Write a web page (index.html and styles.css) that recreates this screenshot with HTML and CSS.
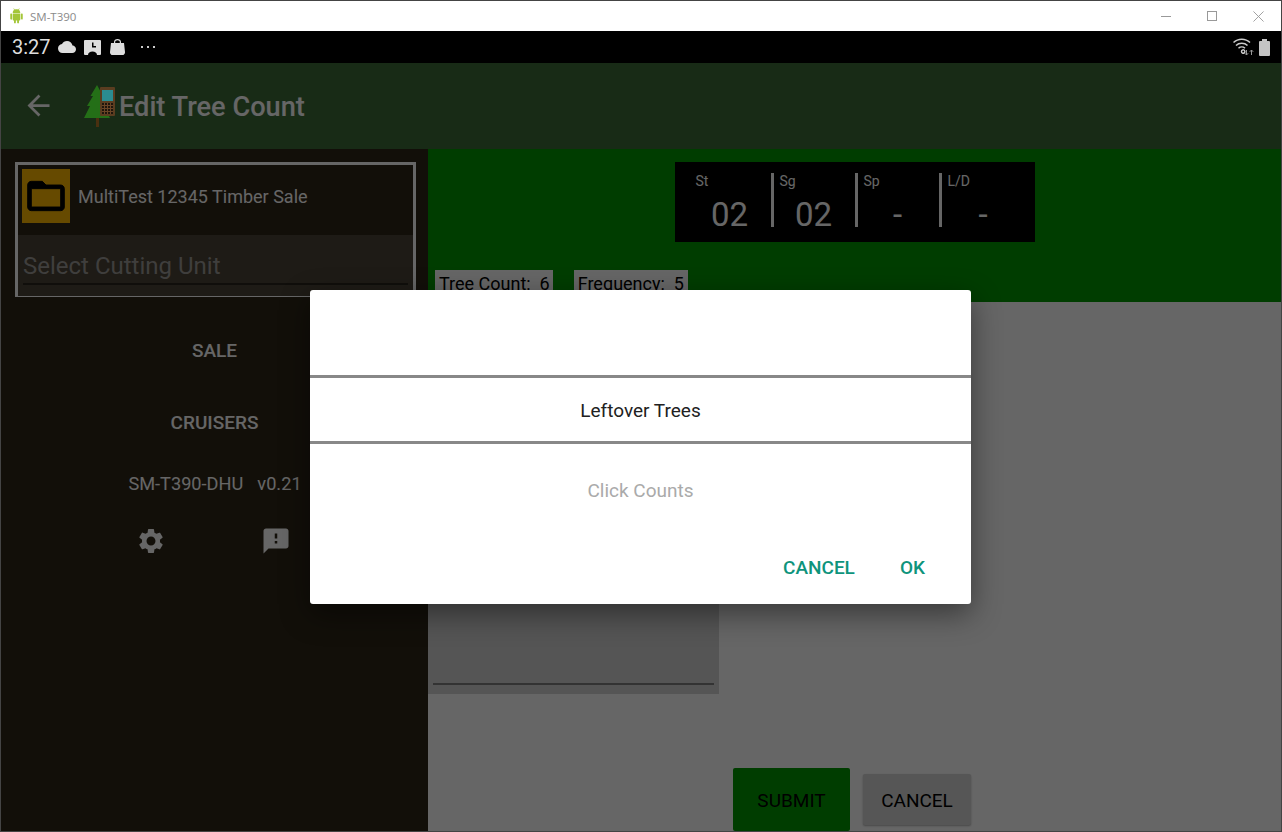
FILE: index.html
```html
<!DOCTYPE html>
<html>
	<head>
		<meta charset="UTF-8">
		<title>SM-T390</title>
		<link rel="stylesheet" href="styles.css">
	</head>
	<body>
		<div id="wrap">
			<div class="titlebar">
				<svg class="droid" viewBox="0 0 24 24"><path d="M6 18c0 .55.45 1 1 1h1v3.500c0 .83.67 1.500 1.500 1.500s1.500-.67 1.500-1.500V19h2v3.500c0 .83.67 1.500 1.500 1.500s1.500-.67 1.500-1.500V19h1c.55 0 1-.45 1-1V8H6v10zM3.500 8C2.670 8 2 8.670 2 9.500v7c0 .83.67 1.500 1.500 1.500S5 17.330 5 16.500v-7C5 8.670 4.330 8 3.500 8zm17 0c-.83 0-1.500.67-1.500 1.500v7c0 .83.67 1.500 1.500 1.500s1.500-.67 1.500-1.500v-7c0-.83-.67-1.500-1.500-1.500zm-4.970-5.840l1.300-1.300c.2-.2.2-.51 0-.71-.2-.2-.51-.2-.71 0l-1.480 1.480C13.850 1.230 12.950 1 12 1c-.96 0-1.860.23-2.660.63L7.850.15c-.2-.2-.51-.2-.71 0-.2.2-.2.51 0 .71l1.310 1.310C6.970 3.260 6 5.010 6 7h12c0-1.990-.97-3.750-2.470-4.840z"/></svg>
				<span class="wintitle">SM-T390</span>
				<div class="winbtns">
					<span class="winmin"></span>
					<span class="winmax"></span>
					<svg class="winclose" viewBox="0 0 12 12"><path d="M.5.5l11 11M11.500.5l-11 11"/></svg>
				</div>
			</div>
			<div class="statusbar">
				<span class="clock">3:27</span>
				<svg class="sicon cloud" viewBox="0 0 24 24"><path d="M19.350 10.040C18.670 6.590 15.640 4 12 4 9.110 4 6.600 5.640 5.350 8.040 2.340 8.360 0 10.910 0 14c0 3.310 2.690 6 6 6h13c2.760 0 5-2.240 5-5 0-2.640-2.050-4.780-4.650-4.960z"/></svg>
				<svg class="sicon sched" viewBox="0 0 17 15"><path fill-rule="evenodd" d="M1 0h15a1 1 0 0 1 1 1v13a1 1 0 0 1-1 1h-3c0-2-2-3.500-4.500-3.500S4 13 4 15H1a1 1 0 0 1-1-1V1a1 1 0 0 1 1-1zm7 2.500v5h4V6H9.500V2.500z"/></svg>
				<svg class="sicon bag" viewBox="0 0 15 16"><path fill-rule="evenodd" d="M4 4V3c0-1.700 1.500-3 3.500-3S11 1.300 11 3v1h3l1 9c.1 1.800-1 3-2.500 3h-10C1 16-.1 14.800 0 13l1-9zm1.200 0h4.600V3c0-1-1-1.800-2.300-1.800S5.200 2 5.200 3z"/></svg>
				<span class="dots"><i></i><i></i><i></i></span>
				<div class="sright">
					<svg class="wifi" viewBox="0 0 22 18"><path d="M9 14.500a1.700 1.700 0 1 1 0 .1zM1 5.500C5.500 1 13 1 17.500 5.500M3.500 8.500C6.500 5.500 12 5.500 15 8.500M6 11.200c1.800-1.700 4.700-1.700 6.500 0" transform="translate(-.5 -1)"/><path class="arrows" d="M13.500 12v5M11.800 15.200l1.700 1.800 1.700-1.800M18.500 17v-5M16.800 13.800l1.700-1.800 1.700 1.800"/></svg>
					<span class="battery"></span>
				</div>
			</div>
			<div class="appbar">
				<svg class="back" viewBox="0 0 24 24"><path d="M20 11H7.830l5.590-5.590L12 4l-8 8 8 8 1.410-1.410L7.830 13H20v-2z"/></svg>
				<svg class="logo" viewBox="0 0 31 42">
					<rect x="12" y="32" width="3" height="10" fill="#4a3010"/>
					<path d="M13 0l6 11h-2.500l6 10H20l6 12H0l6-12H3l6-10H6.500z" fill="#246f17"/>
					<rect x="16" y="2" width="15" height="29" rx="1" fill="#5a3d20"/>
					<rect x="18" y="5" width="11" height="11" fill="#2b8c90"/>
					<rect x="18" y="18" width="11" height="11" fill="#1f160d"/>
					<path d="M18 20.500h11M18 23.500h11M18 26.500h11M20.500 18v11M23.500 18v11M26.500 18v11" stroke="#6b4526" stroke-width="1"/>
				</svg>
				<span class="apptitle">Edit Tree Count</span>
			</div>
			<div class="main">
				<div class="side">
					<div class="salebox">
						<div class="salerow">
							<div class="folder">
								<svg viewBox="0 0 24 24"><path d="M20 6h-8l-2-2H4c-1.100 0-1.990.9-1.990 2L2 18c0 1.100.9 2 2 2h16c1.100 0 2-.9 2-2V8c0-1.100-.9-2-2-2zm0 12H4V8h16v10z"/></svg>
							</div>
							<span class="salename">MultiTest 12345 Timber Sale</span>
						</div>
						<div class="unit"><span>Select Cutting Unit</span></div>
					</div>
					<div class="navitem nav1">SALE</div>
					<div class="navitem nav2">CRUISERS</div>
					<div class="device"><span>SM-T390-DHU</span><span>v0.21</span></div>
					<div class="tools">
						<svg viewBox="0 0 24 24"><path d="M19.140 12.940c.04-.3.06-.61.06-.94 0-.32-.02-.64-.07-.94l2.030-1.580c.18-.14.23-.41.12-.61l-1.920-3.320c-.12-.22-.37-.29-.59-.22l-2.390.96c-.5-.38-1.030-.7-1.620-.94l-.36-2.540c-.04-.24-.24-.41-.48-.41h-3.840c-.24 0-.43.17-.47.41l-.36 2.540c-.59.24-1.130.57-1.620.94l-2.390-.96c-.22-.08-.47 0-.59.22L2.740 8.870c-.12.21-.08.47.12.61l2.030 1.580c-.05.3-.09.63-.09.94s.02.64.07.94l-2.030 1.580c-.18.14-.23.41-.12.61l1.920 3.320c.12.22.37.29.59.22l2.390-.96c.5.38 1.030.7 1.620.94l.36 2.540c.05.24.24.41.48.41h3.840c.24 0 .44-.17.47-.41l.36-2.540c.59-.24 1.130-.56 1.620-.94l2.390.96c.22.08.47 0 .59-.22l1.920-3.320c.12-.22.07-.47-.12-.61l-2.010-1.580zM12 15.600c-1.980 0-3.600-1.620-3.600-3.600s1.620-3.600 3.600-3.600 3.600 1.620 3.600 3.600-1.620 3.600-3.600 3.600z"/></svg>
						<svg viewBox="0 0 24 24"><path d="M20 2H4c-1.100 0-1.990.9-1.990 2L2 22l4-4h14c1.100 0 2-.9 2-2V4c0-1.100-.9-2-2-2zm-7 12h-2v-2h2v2zm0-4h-2V6h2v4z"/></svg>
					</div>
				</div>
				<div class="content">
					<div class="head">
						<div class="board">
							<div class="cell"><span class="lbl">St</span><span class="val">02</span></div>
							<div class="cell"><span class="lbl">Sg</span><span class="val">02</span></div>
							<div class="cell"><span class="lbl">Sp</span><span class="val">-</span></div>
							<div class="cell"><span class="lbl">L/D</span><span class="val">-</span></div>
						</div>
						<div class="counts">
							<span>Tree Count:&nbsp; 6</span>
							<span>Frequency:&nbsp; 5</span>
						</div>
					</div>
					<div class="body">
						<div class="panel"><div class="panelline"></div></div>
						<div class="actions">
							<div class="btn submit">SUBMIT</div>
							<div class="btn cancel">CANCEL</div>
						</div>
					</div>
				</div>
			</div>
			<div class="scrim"></div>
			<div class="dialog">
				<div class="dtitle"></div>
				<div class="dopt">Leftover Trees</div>
				<div class="dhint">Click Counts</div>
				<div class="dbtns"><span>CANCEL</span><span>OK</span></div>
			</div>
		</div>
	</body>
</html>
```
FILE: styles.css
```css
*{margin: 0;padding: 0;box-sizing: border-box;}
html,body{width: 1282px;height: 832px;overflow: hidden;}
body{font-family: Roboto,"Liberation Sans",sans-serif;background: #fff;}

#wrap{position: relative;width: 1282px;height: 832px;display: flex;flex-direction: column;border: 1px solid #444;overflow: hidden;}

/* window chrome */
.titlebar{height: 30px;background: #fff;display: flex;align-items: center;padding-left: 8px;flex-shrink: 0;}
.droid{width: 15px;height: 16px;fill: #a4c639;}
.wintitle{font-family: "Open Sans",sans-serif;font-size: 11.5px;color: #8a8a8a;margin-left: 6px;}
.winbtns{margin-left: auto;display: flex;align-items: center;gap: 36px;padding-right: 17px;}
.winmin{width: 10px;height: 1px;background: #999;}
.winmax{width: 10px;height: 10px;border: 1px solid #999;}
.winclose{width: 11px;height: 11px;stroke: #999;stroke-width: 1;fill: none;}

.statusbar{height: 32px;background: #000;display: flex;align-items: center;padding-left: 11px;flex-shrink: 0;color: #ddd;}
.clock{font-size: 20px;width: 46px;color: #ddd;}
.sicon{fill: #ddd;flex-shrink: 0;}
.cloud{width: 18px;height: 18px;margin-right: 8px;}
.sched{width: 17px;height: 15px;margin-right: 9px;}
.bag{width: 15px;height: 16px;}
.dots{display: flex;gap: 4px;margin-left: 16px;}
.dots i{display: block;width: 2px;height: 2px;background: #ccc;}
.sright{margin-left: auto;display: flex;align-items: center;gap: 4px;padding-right: 11px;}
.wifi{width: 22px;height: 18px;fill: #ccc;stroke: #ccc;stroke-width: 1.5;}
.wifi path:first-child{fill: none;}
.arrows{stroke-width: 1;fill: none;stroke: #999;}
.battery{width: 11px;height: 15px;margin-top: 2px;background: #c4c4c4;border-radius: 1px;position: relative;}
.battery:before{content: "";position: absolute;left: 3px;top: -2px;width: 5px;height: 2px;background: #c4c4c4;}

/* app */
.appbar{height: 86px;background: #3e6b38;display: flex;align-items: center;flex-shrink: 0;padding-left: 21px;}
.back{width: 33px;height: 33px;fill: #fff;margin-bottom: 2px;}
.logo{width: 31px;height: 42px;margin-left: 29px;position: relative;z-index: 2;}
.apptitle{font-size: 27.2px;font-weight: 500;color: #fff;margin-left: 4px;padding-top: 2px;}

.main{flex: 1;display: flex;min-height: 0;}
.side{width: 427px;background: #2f2618;padding: 13px 12px 0 14px;color: #fff;flex-shrink: 0;}
.salebox{height: 135px;border: 3px solid #fff;padding: 4px 0 0;}
.salerow{height: 66px;display: flex;padding-left: 4px;gap: 8px;align-items: flex-start;}
.folder{width: 48px;height: 54px;background: #ffb800;display: flex;align-items: center;justify-content: center;}
.folder svg{width: 44px;height: 44px;fill: #000;stroke: #000;stroke-width: .5;}
.salename{font-size: 18px;line-height: 56px;}
.unit{height: 61px;background: #4b4437;padding: 14px 5px 0;}
.unit span{display: block;font-size: 24px;line-height: 34px;height: 36px;color: #9e9c98;border-bottom: 2px solid #2a251c;}
.navitem{text-align: center;font-size: 19px;line-height: 22px;font-weight: 500;padding-right: 2px;}
.nav1{margin-top: 43px;}
.nav2{margin-top: 50px;}
.device{display: flex;justify-content: center;gap: 14px;font-size: 18.2px;margin-top: 39px;padding-right: 1px;}
.tools{display: flex;margin-top: 32px;padding-left: 121px;gap: 95px;}
.tools svg{width: 30px;height: 30px;fill: #fff;}

.content{flex: 1;background: #fff;min-width: 0;display: flex;flex-direction: column;}
.head{height: 153px;background: #009900;padding-top: 13px;overflow: hidden;flex-shrink: 0;}
.board{width: 360px;height: 80px;background: #000;margin: 0 auto;display: flex;padding: 11px 0 0 15px;}
.cell{width: 84px;height: 54px;padding-left: 6px;border-right: 3px solid #fff;color: #fff;}
.cell:last-child{border-right: 0;}
.lbl{display: block;font-size: 14px;line-height: 16px;}
.val{display: block;font-size: 33px;line-height: 38px;margin-top: 7px;text-align: center;padding-right: 7px;}
.counts{display: flex;gap: 21px;margin-top: 28px;padding-left: 7px;}
.counts span{background: #fff;color: #000;font-size: 18px;padding: 3px 3px 0 4px;height: 40px;}
.counts span:last-child{padding-right: 4px;}

.body{flex: 1;}
.panel{width: 291px;height: 392px;background: #d4d4d4;padding: 381px 5px 0;}
.panelline{height: 2px;background: #808080;}
.actions{display: flex;align-items: center;margin: 74px 0 0 305px;gap: 13px;}
.btn{font-size: 19px;color: #000;display: flex;align-items: center;justify-content: center;border-radius: 2px;padding-top: 1px;}
.submit{width: 117px;height: 63px;background: #009900;}
.cancel{width: 108px;height: 51px;background: #d6d6d6;box-shadow: 0 1px 2px rgba(0,0,0,.3);}

/* modal */
.scrim{position: absolute;left: 0;right: 0;top: 62px;bottom: 0;background: rgba(0,0,0,.6);}
.dialog{position: absolute;left: 309px;top: 289px;width: 661px;height: 314px;background: #fff;border-radius: 3px;box-shadow: 0 10px 30px rgba(0,0,0,.45);display: flex;flex-direction: column;}
.dtitle{height: 88px;border-bottom: 3px solid #888;}
.dopt{height: 66px;border-bottom: 3px solid #888;font-size: 19px;color: #212121;display: flex;align-items: center;justify-content: center;padding-top: 2px;}
.dhint{height: 90px;font-size: 19px;color: #aaa;display: flex;align-items: center;justify-content: center;padding-top: 2px;}
.dbtns{display: flex;justify-content: flex-end;gap: 45px;padding-right: 46px;font-size: 19px;font-weight: 500;color: #0e947c;padding-top: 22px;}
```
